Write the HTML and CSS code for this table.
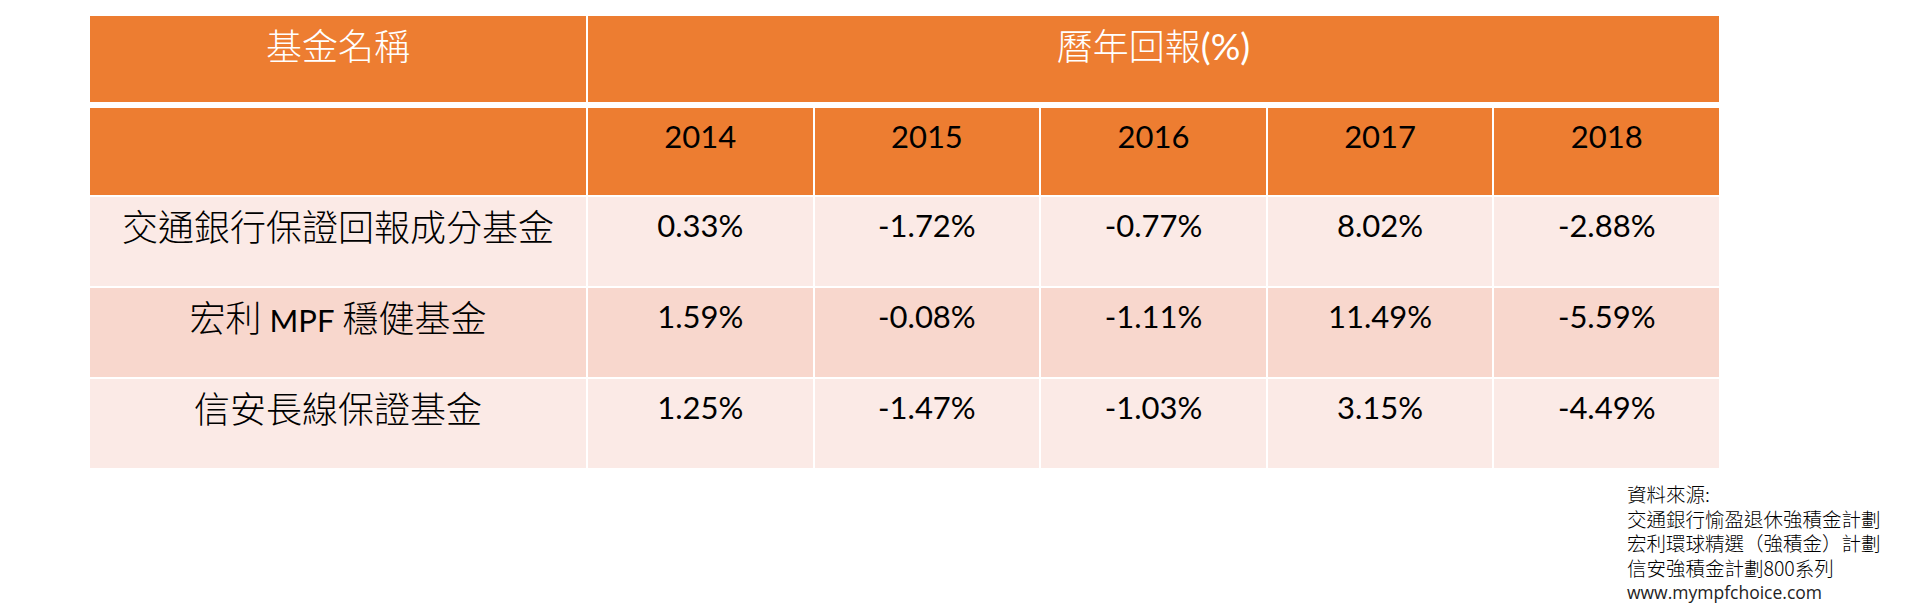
FILE: index.html
```html
<!DOCTYPE html>
<html lang="zh-Hant">
<head>
<meta charset="utf-8">
<title>曆年回報</title>
<link rel="stylesheet" href="styles.css">
</head>
<body>
<div class="sheet">
  <div class="table">
    <div class="row head1">
      <div class="cell cjk">基金名稱</div>
      <div class="cell cjk">曆年回報<span class="lat big">(%)</span></div>
    </div>
    <div class="row head2">
      <div class="cell"></div>
      <div class="cell num">2014</div>
      <div class="cell num">2015</div>
      <div class="cell num">2016</div>
      <div class="cell num">2017</div>
      <div class="cell num">2018</div>
    </div>
    <div class="row light">
      <div class="cell cjk">交通銀行保證回報成分基金</div>
      <div class="cell num">0.33%</div>
      <div class="cell num">-1.72%</div>
      <div class="cell num">-0.77%</div>
      <div class="cell num">8.02%</div>
      <div class="cell num">-2.88%</div>
    </div>
    <div class="row dark">
      <div class="cell cjk">宏利 <span class="lat">MPF</span> 穩健基金</div>
      <div class="cell num">1.59%</div>
      <div class="cell num">-0.08%</div>
      <div class="cell num">-1.11%</div>
      <div class="cell num">11.49%</div>
      <div class="cell num">-5.59%</div>
    </div>
    <div class="row light">
      <div class="cell cjk">信安長線保證基金</div>
      <div class="cell num">1.25%</div>
      <div class="cell num">-1.47%</div>
      <div class="cell num">-1.03%</div>
      <div class="cell num">3.15%</div>
      <div class="cell num">-4.49%</div>
    </div>
  </div>
  <div class="source">
    <div class="line">資料來源:</div>
    <div class="line">交通銀行愉盈退休強積金計劃</div>
    <div class="line">宏利環球精選（強積金）計劃</div>
    <div class="line">信安強積金計劃800系列</div>
    <div class="line url">www.mympfchoice.com</div>
  </div>
</div>
</body>
</html>
```
FILE: styles.css
```css
html, body {
  margin: 0;
  padding: 0;
  background: #ffffff;
}

.sheet {
  padding: 16px 0 0 90px;
}

.table {
  width: 1629px;
  display: flex;
  flex-direction: column;
  gap: 2px;
  background: #ffffff;
}

.row {
  display: grid;
  grid-template-columns: 496px repeat(5, 1fr);
  column-gap: 2px;
}

.row.head1 {
  grid-template-columns: 496px 1fr;
  height: 86px;
  margin-bottom: 4px;
}

.row.head2 {
  height: 87px;
}

.row.light,
.row.dark {
  height: 89px;
}

.cell {
  box-sizing: border-box;
  padding-top: 8px;
  text-align: center;
  line-height: 40px;
  color: #000000;
  white-space: nowrap;
}

.head1 .cell,
.head2 .cell {
  background: #ed7d31;
}

.head1 .cell {
  color: #ffffff;
}

.light .cell {
  background: #fbeae6;
}

.dark .cell {
  background: #f8d7cd;
}

.cjk {
  font-family: "Noto Sans CJK TC", "Noto Sans CJK SC", sans-serif;
  font-weight: 300;
  font-size: 36px;
}

.num,
.lat {
  font-family: Lato, "Open Sans", "Liberation Sans", sans-serif;
  font-weight: 400;
  font-size: 31px;
}

.lat.big {
  font-size: 37px;
}

.source {
  margin: 14px 0 0 1537px;
  font-family: "Noto Sans CJK TC", "Noto Sans CJK SC", sans-serif;
  font-weight: 300;
  font-size: 19.5px;
  line-height: 24.5px;
  color: #000000;
}

.source .url {
  font-family: "Open Sans", "Liberation Sans", sans-serif;
  font-weight: 400;
  font-size: 17.5px;
  color: #222222;
}
```
